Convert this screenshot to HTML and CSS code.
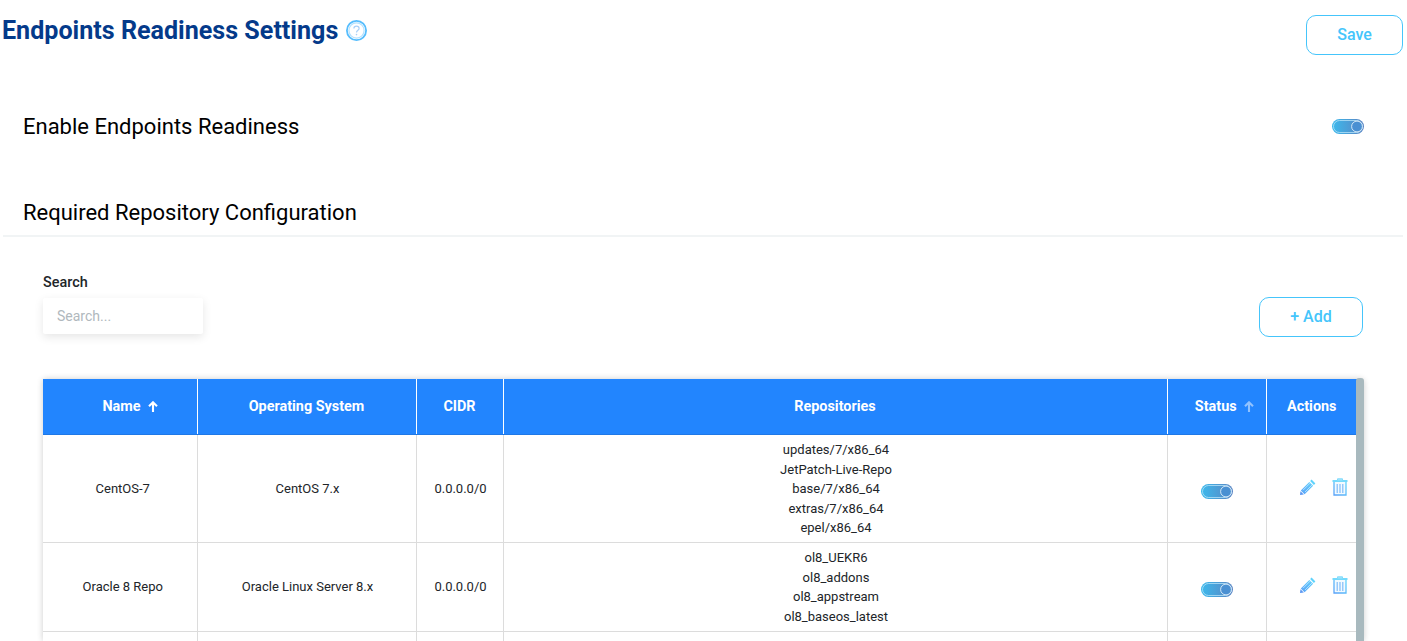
FILE: index.html
```html
<!DOCTYPE html>
<html lang="en">
<head>
    <meta charset="UTF-8">
    <meta name="viewport" content="width=device-width, initial-scale=1.0">
    <title>Endpoints Readiness Settings</title>
    <link rel="stylesheet" href="styles.css">
</head>
<body>
    <!-- Shared gradients and icons -->
    <svg class="icon-defs" width="0" height="0" aria-hidden="true">
        <defs>
            <linearGradient id="toggleFill" x1="0" y1="0" x2="1" y2="0">
                <stop offset="0" stop-color="#3cb9ec"/>
                <stop offset="1" stop-color="#5c84c2"/>
            </linearGradient>
            <linearGradient id="iconFill" x1="0" y1="1" x2="1" y2="0">
                <stop offset="0" stop-color="#5aa2f8"/>
                <stop offset="1" stop-color="#5fd3fc"/>
            </linearGradient>
            <symbol id="toggle" viewBox="0 0 32 15">
                <rect x="0" y="0" width="32" height="15" rx="7.5" fill="url(#toggleFill)"/>
                <rect x="1.5" y="1.5" width="29" height="12" rx="6" fill="none" stroke="#b5e2f7" stroke-width="0.8"/>
                <circle cx="25" cy="7.5" r="5.4" fill="#4a90d2" stroke="#e2f0fa" stroke-width="0.9"/>
            </symbol>
            <symbol id="pencil" viewBox="0 0 16 16">
                <path d="M11.6 0.6 L15.4 4.4 L13.9 5.9 L10.1 2.1 Z" fill="#5fd3fc"/>
                <path d="M9.3 2.9 L13.1 6.7 L4.6 15.2 L0.8 11.4 Z" fill="url(#iconFill)"/>
                <path d="M0.5 12.2 L3.8 15.5 L0 16 Z" fill="#5a96f2"/>
                <path d="M3 11.2 L10.3 3.9 M5 13 L12.2 5.8" stroke="#d8eeff" stroke-width="0.7"/>
            </symbol>
            <symbol id="trash" viewBox="0 0 16 18">
                <path d="M0.5 3 H15.5" stroke="#5cd4fc" stroke-width="1.7"/>
                <path d="M5.5 2.5 V0.8 H10.5 V2.5" fill="#a5e4fc" stroke="#7fdbfc" stroke-width="1"/>
                <path d="M2 4 V17 H14 V4" fill="#f2faff" stroke="url(#iconFill)" stroke-width="1.3"/>
                <path d="M5.2 6 V15 M8 6 V15 M10.8 6 V15" stroke="#7fbcf9" stroke-width="1.2"/>
            </symbol>
            <symbol id="sort-up" viewBox="0 0 10 11">
                <path d="M5 11 V1.5 M1 5.3 L5 1.3 L9 5.3" fill="none" stroke="currentColor" stroke-width="2.1"/>
            </symbol>
        </defs>
    </svg>

    <div class="page">
        <header class="page-header">
            <h1 class="page-title">
                Endpoints Readiness Settings
                <svg class="help-icon" viewBox="0 0 21 21" width="21" height="21">
                    <circle cx="10.5" cy="10.5" r="9.6" fill="none" stroke="#56bdfd" stroke-width="1.8"/>
                    <circle cx="10.5" cy="10.5" r="7.6" fill="none" stroke="#b4e1fe" stroke-width="1.2"/>
                    <path d="M7.9 8.4 C7.9 5.4 13.1 5.4 13.1 8.4 C13.1 10.2 10.5 10.2 10.5 12.4" fill="none" stroke="#a9d0f8" stroke-width="1.2"/>
                    <circle cx="10.5" cy="14.6" r="0.8" fill="#a9d0f8"/>
                </svg>
            </h1>
            <button class="outline-button save-button">Save</button>
        </header>

        <section class="enable-row">
            <h2 class="section-title">Enable Endpoints Readiness</h2>
            <svg class="toggle"><use href="#toggle"/></svg>
        </section>

        <h2 class="section-title repo-title">Required Repository Configuration</h2>

        <section class="repo-section">
            <div class="toolbar">
                <div class="search-box">
                    <label class="search-label" for="search">Search</label>
                    <input class="search-input" id="search" type="text" placeholder="Search...">
                </div>
                <button class="outline-button add-button">+ Add</button>
            </div>

            <div class="table-wrap">
                <table class="repo-table">
                    <colgroup>
                        <col class="col-name">
                        <col class="col-os">
                        <col class="col-cidr">
                        <col class="col-repos">
                        <col class="col-status">
                        <col class="col-actions">
                    </colgroup>
                    <thead>
                        <tr>
                            <th class="th-name">Name <svg class="sort-arrow"><use href="#sort-up"/></svg></th>
                            <th>Operating System</th>
                            <th>CIDR</th>
                            <th>Repositories</th>
                            <th class="th-status">Status <svg class="sort-arrow faded"><use href="#sort-up"/></svg></th>
                            <th>Actions</th>
                        </tr>
                    </thead>
                    <tbody>
                        <tr class="row-five">
                            <td>CentOS-7</td>
                            <td>CentOS 7.x</td>
                            <td>0.0.0.0/0</td>
                            <td>
                                <div>updates/7/x86_64</div>
                                <div>JetPatch-Live-Repo</div>
                                <div>base/7/x86_64</div>
                                <div>extras/7/x86_64</div>
                                <div>epel/x86_64</div>
                            </td>
                            <td class="status"><svg class="toggle"><use href="#toggle"/></svg></td>
                            <td class="actions">
                                <svg class="edit-icon"><use href="#pencil"/></svg>
                                <svg class="delete-icon"><use href="#trash"/></svg>
                            </td>
                        </tr>
                        <tr class="row-four">
                            <td>Oracle 8 Repo</td>
                            <td>Oracle Linux Server 8.x</td>
                            <td>0.0.0.0/0</td>
                            <td>
                                <div>ol8_UEKR6</div>
                                <div>ol8_addons</div>
                                <div>ol8_appstream</div>
                                <div>ol8_baseos_latest</div>
                            </td>
                            <td class="status"><svg class="toggle"><use href="#toggle"/></svg></td>
                            <td class="actions">
                                <svg class="edit-icon"><use href="#pencil"/></svg>
                                <svg class="delete-icon"><use href="#trash"/></svg>
                            </td>
                        </tr>
                        <tr class="row-cut">
                            <td></td>
                            <td></td>
                            <td></td>
                            <td></td>
                            <td></td>
                            <td></td>
                        </tr>
                    </tbody>
                </table>
                <div class="scroll-bar"></div>
            </div>
        </section>
    </div>
</body>
</html>
```

FILE: styles.css
```css
html, body {
    margin: 0;
    height: 641px;
    overflow: hidden;
    background: #fff;
}
body {
    font-family: Roboto, "Liberation Sans", sans-serif;
    color: #000;
}
.icon-defs {
    position: absolute;
}
.page {
    width: 1400px;
    padding-left: 3px;
}
.page-header {
    display: flex;
    justify-content: space-between;
    align-items: flex-start;
    padding-top: 15px;
}
.page-title {
    display: flex;
    align-items: center;
    gap: 8px;
    margin: 0 0 0 -1px;
    height: 30px;
    font-size: 25.1px;
    font-weight: 700;
    color: #043a8a;
}
.help-icon {
    margin-top: 1px;
}
.outline-button {
    background: #fff;
    border: 1px solid #45c5fb;
    border-radius: 10px;
    padding: 0 0 2px;
    color: #45c5fb;
    font-family: inherit;
    font-size: 16px;
    font-weight: 500;
    cursor: pointer;
}
.save-button {
    width: 97px;
    height: 40px;
}
.enable-row {
    display: flex;
    justify-content: space-between;
    align-items: center;
    margin-top: 59px;
    padding: 0 39px 0 20px;
}
.enable-row .toggle {
    margin-top: -2px;
}
.section-title {
    margin: 0;
    font-size: 22px;
    font-weight: 400;
    line-height: 26px;
}
.toggle {
    display: block;
    width: 32px;
    height: 15px;
}
.repo-title {
    margin-top: 60px;
    padding: 0 0 9px 20px;
    border-bottom: 2px solid #f1f4f5;
}
.repo-section {
    padding: 37px 40px 0;
}
.toolbar {
    display: flex;
    justify-content: space-between;
    align-items: flex-start;
}
.search-label {
    display: block;
    margin: 1px 0 7px;
    font-size: 14.4px;
    font-weight: 500;
    line-height: 16px;
    color: #212529;
}
.search-input {
    display: block;
    box-sizing: border-box;
    width: 160px;
    height: 36px;
    padding: 0 14px;
    border: none;
    border-radius: 2px;
    box-shadow: 0 3px 10px rgba(0, 0, 0, 0.1);
    font-family: inherit;
    font-size: 14px;
    outline: none;
}
.search-input::placeholder {
    color: #b0b8bd;
}
.add-button {
    width: 104px;
    height: 40px;
    margin-top: 23px;
}
.table-wrap {
    display: flex;
    margin-top: 42px;
    width: 1321px;
    box-shadow: 0 0 6px rgba(0, 0, 0, 0.2);
    border-radius: 2px 4px 0 0;
}
.repo-table {
    width: 1314px;
    table-layout: fixed;
    border-collapse: collapse;
    font-size: 13px;
    color: #212529;
}
.col-name { width: 154px; }
.col-os { width: 219px; }
.col-cidr { width: 87px; }
.col-repos { width: 664px; }
.col-status { width: 99px; }
.repo-table th {
    height: 55px;
    padding: 0;
    background: #2285fe;
    border-left: 1px solid #fff;
    border-bottom: 1px solid #1f78e6;
    box-sizing: border-box;
    color: #fff;
    font-size: 14.4px;
    font-weight: 700;
}
.repo-table th:first-child {
    border-left: none;
}
.repo-table .th-name {
    padding-left: 21px;
}
.repo-table .th-status {
    padding-left: 16px;
}
.sort-arrow {
    display: inline-block;
    width: 10px;
    height: 11px;
    margin-left: 4px;
    vertical-align: -1px;
}
.sort-arrow.faded {
    opacity: 0.5;
}
.repo-table td {
    padding: 0 0 0 2px;
    border-left: 1px solid #dcdcdc;
    border-bottom: 1px solid #dcdcdc;
    box-sizing: border-box;
    text-align: center;
    vertical-align: middle;
    line-height: 19.5px;
}
.repo-table td:first-child {
    border-left: none;
    padding-left: 6px;
}
.row-five {
    height: 108px;
}
.repo-table .row-five td {
    padding-top: 2px;
}
.row-four {
    height: 89px;
}
.repo-table .row-four td {
    padding-top: 1px;
}
.row-cut {
    height: 10px;
}
.repo-table .row-cut td {
    padding-top: 0;
    border-bottom: none;
}
.repo-table .status {
    padding-left: 0;
}
.repo-table td .toggle {
    margin: 4px auto 0;
}
.repo-table .actions {
    padding-left: 33px;
    text-align: left;
    white-space: nowrap;
    font-size: 0;
}
.actions svg {
    display: inline-block;
    vertical-align: middle;
}
.edit-icon {
    width: 16px;
    height: 16px;
    margin-bottom: 4px;
}
.delete-icon {
    width: 16px;
    height: 18px;
    margin: 0 0 4px 16px;
}
.scroll-bar {
    flex: none;
    width: 8px;
    height: 263px;
    margin: -1px 0 0 -1px;
    background: #a8b9be;
    border-radius: 3px 3px 0 0;
}
```
